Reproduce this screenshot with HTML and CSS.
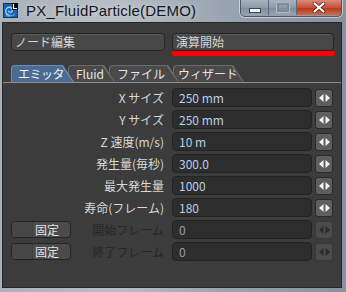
FILE: index.html
```html
<!DOCTYPE html>
<html lang="ja">
<head>
  <meta charset="UTF-8" />
  <title>PX_FluidParticle(DEMO)</title>
  <link rel="stylesheet" href="styles.css">
</head>
<body>
  <div class="window">
    <div class="titlebar">
      <svg class="app-icon" width="15" height="15" viewBox="0 0 15 15">
        <rect x="0" y="0" width="15" height="15" fill="#1d63ad"/>
        <rect x="0.5" y="0.5" width="14" height="14" fill="none" stroke="#0c3566"/>
        <path d="M7.5 12.5c-3 0-4.8-2-4.8-4.4 0-2.2 1.7-3.8 3.7-3.8 1.8 0 3 1.3 3 2.8 0 1.3-1 2.3-2.2 2.3-1 0-1.7-.7-1.7-1.6" fill="none" stroke="#8fd0ff" stroke-width="1.4"/>
        <path d="M3 12.5c2 1 6 1 9-1.5" fill="none" stroke="#5fb0f0" stroke-width="1"/>
        <rect x="9" y="0" width="6" height="7" fill="#0b0b0b"/>
        <path d="M10.5 1v4.5h3.5" fill="none" stroke="#ffffff" stroke-width="1.2"/>
      </svg>
      <span class="title">PX_FluidParticle(DEMO)</span>
      <div class="caption-btns">
        <div class="cap min"><span class="min-bar"></span></div>
        <div class="cap max"><span class="max-box"></span></div>
        <div class="cap close">
          <svg width="14" height="11" viewBox="0 0 14 11">
            <path d="M2.5 1.5l9 8M11.5 1.5l-9 8" stroke="#4a1a12" stroke-width="3.6" stroke-linecap="round"/>
            <path d="M2.5 1.5l9 8M11.5 1.5l-9 8" stroke="#ffffff" stroke-width="2.2" stroke-linecap="round"/>
          </svg>
        </div>
      </div>
    </div>

    <div class="client">
      <div class="topbar">
        <button class="btn node-btn">ノード編集</button>
        <div class="run">
          <button class="btn run-btn">演算開始</button>
          <div class="progress"></div>
        </div>
      </div>

      <div class="tabs">
        <div class="tab active tab-emitter"><span>エミッタ</span></div>
        <div class="tab tab-fluid"><span>Fluid</span></div>
        <div class="tab tab-file"><span>ファイル</span></div>
        <div class="tab tab-wizard"><span>ウィザード</span></div>
      </div>

      <div class="rows">
        <div class="row">
          <div class="slot"></div>
          <label class="label">X サイズ</label>
          <div class="field">250 mm</div>
          <div class="spin"><svg width="11" height="8" viewBox="0 0 11 8"><path d="M0 4L4.5 0v8zM6.5 0L11 4 6.5 8z"/></svg></div>
        </div>
        <div class="row">
          <div class="slot"></div>
          <label class="label">Y サイズ</label>
          <div class="field">250 mm</div>
          <div class="spin"><svg width="11" height="8" viewBox="0 0 11 8"><path d="M0 4L4.5 0v8zM6.5 0L11 4 6.5 8z"/></svg></div>
        </div>
        <div class="row">
          <div class="slot"></div>
          <label class="label">Z 速度(m/s)</label>
          <div class="field">10 m</div>
          <div class="spin"><svg width="11" height="8" viewBox="0 0 11 8"><path d="M0 4L4.5 0v8zM6.5 0L11 4 6.5 8z"/></svg></div>
        </div>
        <div class="row">
          <div class="slot"></div>
          <label class="label">発生量(毎秒)</label>
          <div class="field">300.0</div>
          <div class="spin"><svg width="11" height="8" viewBox="0 0 11 8"><path d="M0 4L4.5 0v8zM6.5 0L11 4 6.5 8z"/></svg></div>
        </div>
        <div class="row">
          <div class="slot"></div>
          <label class="label">最大発生量</label>
          <div class="field">1000</div>
          <div class="spin"><svg width="11" height="8" viewBox="0 0 11 8"><path d="M0 4L4.5 0v8zM6.5 0L11 4 6.5 8z"/></svg></div>
        </div>
        <div class="row">
          <div class="slot"></div>
          <label class="label">寿命(フレーム)</label>
          <div class="field">180</div>
          <div class="spin"><svg width="11" height="8" viewBox="0 0 11 8"><path d="M0 4L4.5 0v8zM6.5 0L11 4 6.5 8z"/></svg></div>
        </div>
        <div class="row disabled">
          <div class="slot"><button class="fix-btn"><span class="fix-left"></span><span class="fix-text">固定</span></button></div>
          <label class="label">開始フレーム</label>
          <div class="field">0</div>
          <div class="spin"><svg width="11" height="8" viewBox="0 0 11 8"><path d="M0 4L4.5 0v8zM6.5 0L11 4 6.5 8z"/></svg></div>
        </div>
        <div class="row disabled">
          <div class="slot"><button class="fix-btn"><span class="fix-left"></span><span class="fix-text">固定</span></button></div>
          <label class="label">終了フレーム</label>
          <div class="field">0</div>
          <div class="spin"><svg width="11" height="8" viewBox="0 0 11 8"><path d="M0 4L4.5 0v8zM6.5 0L11 4 6.5 8z"/></svg></div>
        </div>
      </div>
    </div>
  </div>
</body>
</html>
```

FILE: styles.css
```css
html, body { margin: 0; padding: 0; }
body { width: 346px; height: 292px; overflow: hidden; font-family: "Noto Sans CJK JP", "Noto Sans", sans-serif; font-size: 12px; }

.window { width: 346px; height: 292px; box-sizing: border-box; padding: 0 4px 4px 2px; background: linear-gradient(to right, #a9b2bb, #b6bec6 35%, #98a4b0 65%, #86929f); display: flex; flex-direction: column; }

/* title bar */
.titlebar { height: 22px; display: flex; align-items: flex-start; }
.app-icon { margin: 3px 0 0 1px; flex: none; }
.title { margin: 2px 0 0 8px; font-family: "Liberation Sans", Arial, sans-serif; font-size: 15px; letter-spacing: 0.2px; color: #15161e; line-height: 18px; text-shadow: 0 0 6px rgba(255,255,255,0.6); }
.caption-btns { margin-left: auto; display: flex; height: 16px; border: 1px solid #4c5866; border-top: none; border-radius: 0 0 5px 5px; overflow: hidden; box-shadow: 0 0 0 1px rgba(255,255,255,0.5); }
.cap { height: 15px; display: flex; align-items: center; justify-content: center; }
.cap.min, .cap.max { width: 27px; background: linear-gradient(#a8b3bf, #8e9aa8 50%, #7f8b99 51%, #97a3b0); border-right: 1px solid #5d6876; }
.cap.close { width: 44px; background: linear-gradient(#d98a78, #c8503a 50%, #b23420 51%, #d06a48); }
.min-bar { width: 10px; height: 3px; background: #f4f6f8; border: 1px solid #3c4654; margin-top: 5px; }
.max-box { width: 8px; height: 5px; border: 2px solid #7e8996; box-shadow: 0 0 0 1px #b0bac4; }

/* client area */
.client { flex: 1; background: #3c3c3c; border: 1px solid #272727; }

.topbar { display: flex; gap: 7px; padding: 10px 0 0 8px; }
.btn { height: 18px; box-sizing: border-box; padding: 0 0 0 3px; text-align: left; font-family: "Noto Sans CJK JP", sans-serif; font-size: 12px; line-height: 14px; color: #d6d6d6; background: #484848; border: 1px solid #252525; border-radius: 4px; box-shadow: inset 0 1px 0 #575757; }
.node-btn { width: 154px; }
.run { display: flex; flex-direction: column; }
.run-btn { width: 162px; }
.progress { width: 163px; height: 5px; background: #ff0000; border-radius: 3px; }

/* tabs */
.tabs { display: flex; margin-top: 9px; padding-left: 8px; border-bottom: 1px solid #8e8e8e; height: 17px; }
.tab { position: relative; height: 17px; box-sizing: border-box; padding: 1px 1px 0 1px; background: #6c6c6c; border-radius: 4px 0 0 0; clip-path: polygon(0 0, calc(100% - 11px) 0, 100% 100%, 0 100%); margin-left: -6px; }
.tab span { display: block; height: 16px; padding-left: 7px; line-height: 16px; color: #e6e6e6; background: #4a4a4a; border-radius: 3px 0 0 0; clip-path: polygon(0 0, calc(100% - 11.6px) 0, 100% 100%, 0 100%); white-space: nowrap; }
.tab.active { background: #6f8db0; }
.tab.active span { background: #4b6c92; color: #f2f2f2; }
.tab-emitter { width: 63px; margin-left: 0; z-index: 4; }
.tab-emitter span { padding-left: 6px; letter-spacing: -0.5px; }
.tab-fluid { width: 47px; z-index: 3; }
.tab-fluid span { padding-left: 7px; }
.tab-file { width: 70px; z-index: 2; }
.tab-wizard { width: 71px; z-index: 1; }
.tab-wizard span { padding-left: 4px; }

/* parameter rows */
.rows { padding: 5px 0 0 8px; display: flex; flex-direction: column; gap: 3px; }
.row { display: flex; align-items: center; height: 19px; }
.slot { width: 60px; flex: none; display: flex; }
.label { width: 93px; flex: none; text-align: right; color: #d8d8d8; line-height: 19px; }
.field { width: 140px; height: 19px; box-sizing: border-box; margin-left: 8px; padding-left: 6px; line-height: 17px; color: #b9cdea; background: #2d2d2d; border: 1px solid #232323; border-radius: 4px; }
.spin { width: 18px; height: 18px; box-sizing: border-box; margin-left: 3px; display: flex; align-items: center; justify-content: center; background: #5e5e5e; border: 1px solid #2a2a2a; border-radius: 3px; }
.spin svg { fill: #f4f4f4; }

.row.disabled .label { color: #262626; }
.row.disabled .field { color: #9c9c9c; }
.row.disabled .spin { background: #4c4c4c; border-color: #383838; }
.row.disabled .spin svg { fill: #2c2c2c; }

.fix-btn { width: 60px; height: 17px; box-sizing: border-box; padding: 0; display: flex; background: #4b4b4b; border: 1px solid #242424; border-radius: 4px; font-family: "Noto Sans CJK JP", sans-serif; font-size: 12px; color: #e2e2e2; overflow: hidden; }
.fix-left { width: 20px; height: 100%; background: #474747; border-right: 1px solid #3f3f3f; }
.fix-text { flex: 1; line-height: 15px; text-align: left; padding-left: 2px; }
```
